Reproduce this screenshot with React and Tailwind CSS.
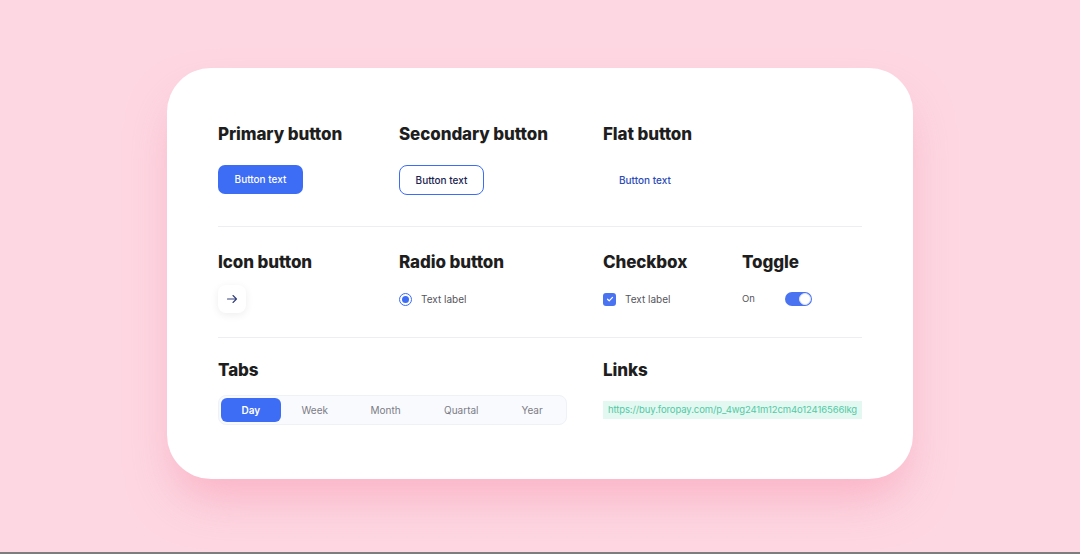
import React from "react";

const font = { fontFamily: "Inter, 'Noto Sans', sans-serif" };

function H({ children }) {
  return (
    <div className="text-[17px] leading-[24px] font-extrabold text-[#1e1e1e] tracking-[-0.1px]">
      {children}
    </div>
  );
}

export default function App() {
  return (
    <div
      className="w-full h-[554px] bg-[#fdd7e2] border-b-2 border-[#7d7d7d] flex justify-center overflow-hidden"
      style={font}
    >
      <div className="mt-[68px] w-[746px] h-[411px] bg-white rounded-[44px] shadow-[0_26px_44px_-6px_rgba(250,165,188,0.7)] px-[51px] pt-[54px]">
        {/* Row 1 */}
        <div className="grid grid-cols-[181px_204px_139px_120px]">
          <div>
            <H>Primary button</H>
            <button className="mt-[19px] w-[85px] h-[29px] rounded-[7px] bg-[#3d6cf5] text-white text-[10px] font-medium">
              Button text
            </button>
          </div>
          <div>
            <H>Secondary button</H>
            <button className="mt-[19px] w-[85px] h-[30px] rounded-[8px] border-[1.5px] border-[#3d6cf5] bg-white text-[#1b2450] text-[10px] font-medium">
              Button text
            </button>
          </div>
          <div>
            <H>Flat button</H>
            <button className="mt-[19px] w-[85px] h-[30px] text-left pl-[16px] text-[#2c4bb8] text-[10px] font-medium">
              Button text
            </button>
          </div>
          <div />
        </div>
        <div className="mt-[31px] h-px bg-[#eeeef2]" />

        {/* Row 2 */}
        <div className="mt-[23px] grid grid-cols-[181px_204px_139px_120px]">
          <div>
            <H>Icon button</H>
            <div className="mt-[11px] w-[28px] h-[28px] rounded-[8px] bg-white shadow-[0_2px_8px_rgba(0,0,0,0.07)] flex items-center justify-center">
              <svg width="12" height="12" viewBox="0 0 12 12" fill="none" stroke="#34407a" strokeWidth="1.1" strokeLinecap="round" strokeLinejoin="round">
                <path d="M1.5 6h9M7 2.5 10.5 6 7 9.5" />
              </svg>
            </div>
          </div>
          <div>
            <H>Radio button</H>
            <div className="mt-[11px] h-[28px] flex items-center">
              <div className="w-[13px] h-[13px] rounded-full border border-[#3d6cf5] flex items-center justify-center">
                <div className="w-[7px] h-[7px] rounded-full bg-[#3d6cf5]" />
              </div>
              <span className="ml-[9px] text-[10px] text-[#55555c]">Text label</span>
            </div>
          </div>
          <div>
            <H>Checkbox</H>
            <div className="mt-[11px] h-[28px] flex items-center">
              <div className="w-[13px] h-[13px] rounded-[3px] bg-[#4a73f2] flex items-center justify-center">
                <svg width="8" height="8" viewBox="0 0 8 8" fill="none" stroke="white" strokeWidth="1.2" strokeLinecap="round" strokeLinejoin="round">
                  <path d="M1.5 4.2 3.2 5.8 6.5 2.4" />
                </svg>
              </div>
              <span className="ml-[9px] text-[10px] text-[#55555c]">Text label</span>
            </div>
          </div>
          <div>
            <H>Toggle</H>
            <div className="mt-[11px] h-[28px] flex items-center">
              <span className="text-[9.5px] text-[#55555c] w-[43px]">On</span>
              <div className="w-[27px] h-[14px] rounded-full bg-[#4a73f2] flex items-center justify-end pr-[1px]">
                <div className="w-[12px] h-[12px] rounded-full bg-white border border-[#dfe5fb]" />
              </div>
            </div>
          </div>
        </div>
        <div className="mt-[24px] h-px bg-[#eeeef2]" />

        {/* Row 3 */}
        <div className="mt-[20px] grid grid-cols-[385px_259px]">
          <div>
            <H>Tabs</H>
            <div className="mt-[13px] w-[349px] h-[30px] rounded-[8px] bg-[#f8fafd] border border-[#eef1f6] flex items-center px-[2px]">
              <div className="w-[60px] h-[24px] rounded-[6px] bg-[#3d6cf5] text-white text-[10px] font-semibold flex items-center justify-center">
                Day
              </div>
              <div className="w-[68px] text-center text-[10px] text-[#7c7c86]">Week</div>
              <div className="w-[74px] text-center text-[10px] text-[#7c7c86]">Month</div>
              <div className="w-[78px] text-center text-[10px] text-[#7c7c86]">Quartal</div>
              <div className="w-[64px] text-center text-[10px] text-[#7c7c86]">Year</div>
            </div>
          </div>
          <div>
            <H>Links</H>
            <div className="mt-[19px] h-[18px] bg-[#e2f8f1] flex items-center justify-center text-[9.5px] text-[#52c9a4] tracking-[-0.1px] whitespace-nowrap overflow-hidden">
              https://buy.foropay.com/p_4wg241m12cm4o12416566lkg
            </div>
          </div>
        </div>
      </div>
    </div>
  );
}
